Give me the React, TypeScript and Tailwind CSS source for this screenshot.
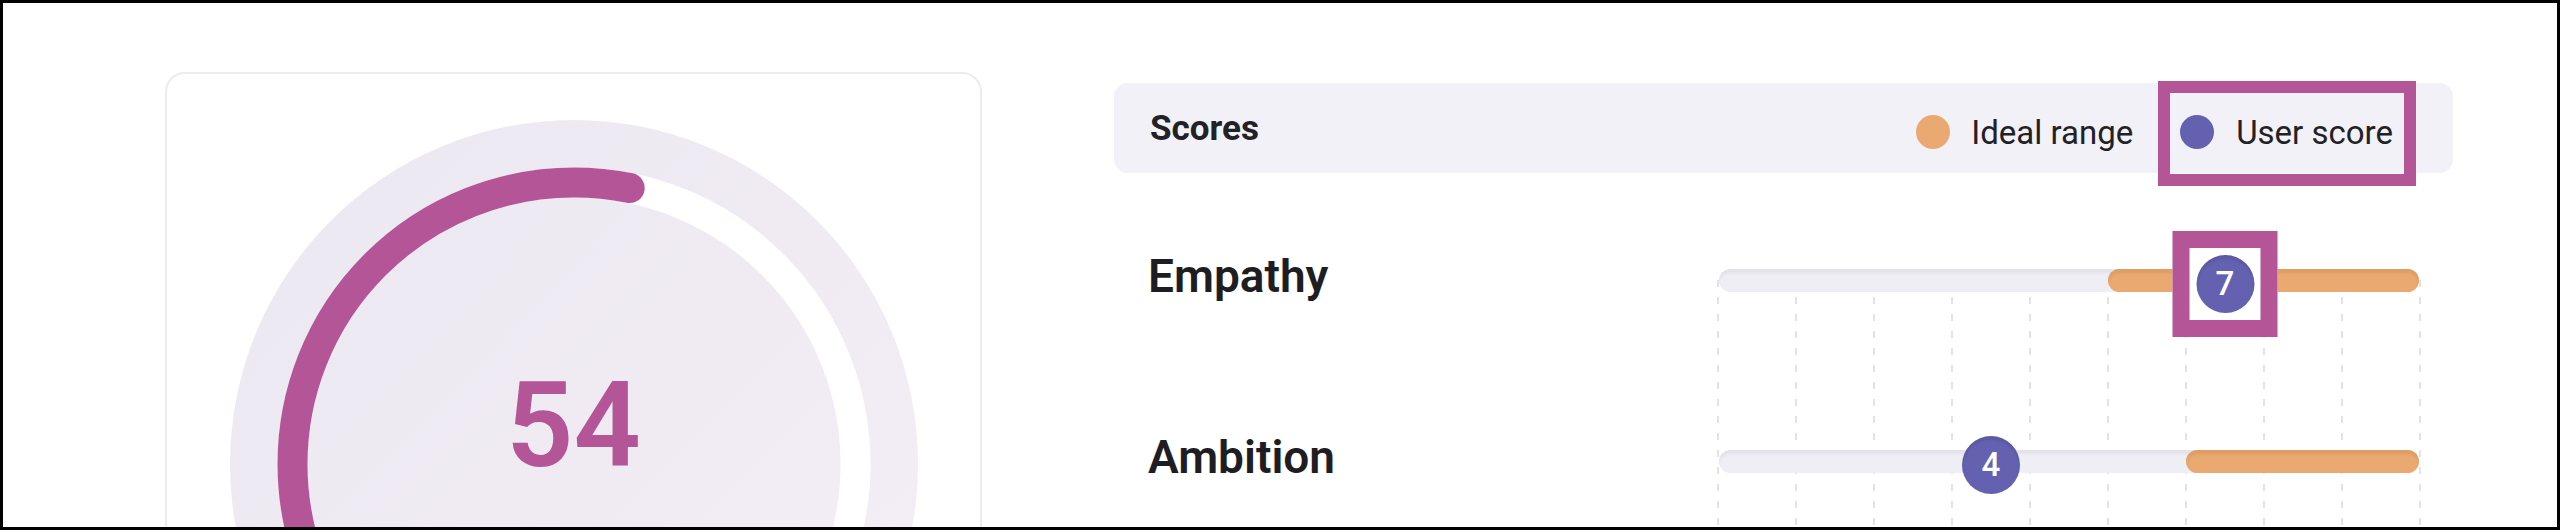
import React from "react";

const font = { fontFamily: "Roboto, 'Noto Sans', sans-serif" };

type Score = { label: string; value: number; lo: number; hi: number; highlight?: boolean };

const scores: Score[] = [
    { label: "Empathy", value: 7, lo: 6, hi: 9, highlight: true },
    { label: "Ambition", value: 4, lo: 7, hi: 9 },
];

const STEPS = 9;

function Gauge({ value }: { value: number }) {
    const r = 281.5;
    const c = 2 * Math.PI * r;
    // arc starts at the bottom and runs clockwise
    const len = (value / 100) * c - 15;

    return (
        <div className="relative w-[688px] h-[688px]">
            <svg width="688" height="688" viewBox="0 0 688 688">
                <defs>
                    <linearGradient id="disc" x1="0" y1="0" x2="1" y2="1">
                        <stop offset="0" stopColor="#ebe8f1" />
                        <stop offset="1" stopColor="#f5eef5" />
                    </linearGradient>
                </defs>
                <circle cx="344" cy="344" r="344" fill="url(#disc)" />
                <circle cx="344" cy="344" r={r} fill="none" stroke="#ffffff" strokeWidth="30" />
                <circle
                    cx="344"
                    cy="344"
                    r={r}
                    fill="none"
                    stroke="#b35597"
                    strokeWidth="30"
                    strokeLinecap="round"
                    strokeDasharray={`${len} ${c}`}
                    transform="rotate(90 344 344)"
                />
            </svg>
            {/* score number */}
            <div
                className="absolute left-0 right-0 top-[247px] text-center text-[118px] leading-none font-semibold text-[#b35597]"
                style={font}
            >
                {value}
            </div>
        </div>
    );
}

function Knob({ value }: { value: number }) {
    return (
        <div
            className="w-[58px] h-[58px] rounded-full bg-[#6461b0] shadow-[inset_0_4px_3px_rgba(0,0,0,0.08)] flex items-center justify-center text-white text-[33px] font-medium leading-none"
            style={font}
        >
            {value}
        </div>
    );
}

function ScoreRow({ score }: { score: Score }) {
    const left = ((score.lo - 1) / STEPS) * 100;
    const width = ((score.hi - score.lo + 1) / STEPS) * 100;
    const pos = ((score.value - 0.5) / STEPS) * 100;

    return (
        <div className="h-[181px] flex items-center">
            <span className="pl-[34px] -translate-y-[5px] text-[46px] leading-none font-semibold text-[#1e1e22]" style={font}>
                {score.label}
            </span>
            <div className="ml-auto mr-[33px] w-[702px] relative z-10">
                {/* track */}
                <div className="relative mx-[1px] h-[23px] rounded-full bg-[#efeef4] shadow-[inset_0_4px_3px_rgba(60,40,100,0.06)]">
                    <div
                        className="absolute top-0 bottom-0 rounded-full bg-[#e9a970] shadow-[inset_0_4px_3px_rgba(150,70,0,0.12)]"
                        style={{ left: `${left}%`, width: `${width}%` }}
                    />
                </div>
                {/* user score */}
                <div
                    className="absolute top-1/2 -translate-x-1/2 -translate-y-1/2 mt-[3px]"
                    style={{ left: `${pos}%` }}
                >
                    {score.highlight ? (
                        <div className="border-[17px] border-[#b35597] bg-white w-[105px] h-[106px] flex items-center justify-center">
                            <Knob value={score.value} />
                        </div>
                    ) : (
                        <Knob value={score.value} />
                    )}
                </div>
            </div>
        </div>
    );
}

export default function App() {
    return (
        <div className="w-[2560px] h-[530px] border-[3px] border-black bg-white overflow-hidden" style={font}>
            <div className="flex items-start pl-[162px] pt-[69px]">
                {/* Overall card */}
                <div className="w-[817px] h-[600px] shrink-0 border-2 border-[#ecebf4] rounded-[20px] flex justify-center pt-[46px]">
                    <Gauge value={54} />
                </div>

                {/* Scores panel */}
                <div className="ml-[132px] mt-[11px] w-[1339px] shrink-0">
                    <div className="h-[90px] rounded-[14px] bg-[#f2f1f7] flex items-center pl-[36px] pr-[60px]">
                        <span className="text-[35px] font-bold text-[#222226] leading-none">Scores</span>
                        <div className="ml-auto mt-[8px] flex items-center text-[33px] text-[#222226] leading-none">
                            <div className="flex items-center h-[34px]">
                                <span className="w-[34px] h-[34px] rounded-full bg-[#e9a970]" />
                                <span className="ml-[21px]">Ideal range</span>
                            </div>
                            <div className="relative flex items-center h-[34px] ml-[47px]">
                                <span className="w-[34px] h-[34px] rounded-full bg-[#6461b0]" />
                                <span className="ml-[22px]">User score</span>
                                {/* highlight */}
                                <div className="absolute -left-[22px] -right-[23px] -top-[34px] -bottom-[37px] border-[12px] border-[#b35597]" />
                            </div>
                        </div>
                    </div>

                    <div className="relative mt-[17px]">
                        {/* grid lines */}
                        <div className="absolute top-[90px] bottom-0 right-[33px] w-[702px] flex justify-between">
                            {Array.from({ length: STEPS + 1 }).map((_, i) => (
                                <div
                                    key={i}
                                    className="w-[2px] -ml-[1px] -mr-[1px] h-full bg-[linear-gradient(to_bottom,#e3e2eb_7px,transparent_7px)] bg-[length:2px_17px]"
                                />
                            ))}
                        </div>
                        {scores.map((s) => (
                            <ScoreRow key={s.label} score={s} />
                        ))}
                    </div>
                </div>
            </div>
        </div>
    );
}
